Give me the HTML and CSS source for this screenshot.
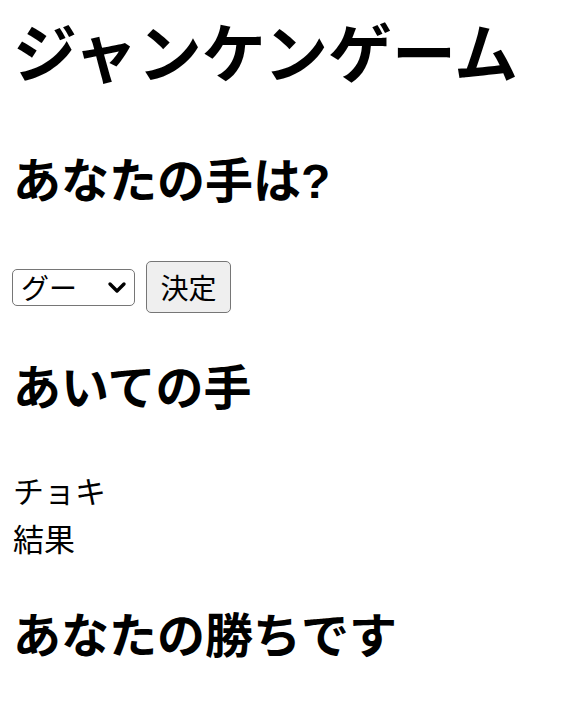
FILE: index.html
```html
<!DOCTYPE html>
<html lang="ja">
<head>
<meta charset="utf-8">
<title>ジャンケンゲーム</title>
<link rel="stylesheet" href="styles.css">
</head>
<body>
<h1 class="title">ジャンケンゲーム</h1>
<h2 class="heading first">あなたの手は?</h2>
<div class="controls">
  <span class="select-wrap">
    <select class="hand">
      <option>グー</option>
      <option>チョキ</option>
      <option>パー</option>
    </select>
    <svg class="chevron" viewBox="0 0 20 14" width="20" height="14" aria-hidden="true">
      <path d="M3 3 L10 10 L17 3" fill="none" stroke="#000" stroke-width="3.4" stroke-linecap="round" stroke-linejoin="round"/>
    </svg>
  </span>
  <button class="decide">決定</button>
</div>
<h2 class="heading opponent">あいての手</h2>
<div class="line first-line">チョキ</div>
<div class="line">結果</div>
<h2 class="heading result">あなたの勝ちです</h2>
</body>
</html>
```

FILE: styles.css
```css
html, body {
  margin: 0;
  padding: 0;
  background: #fff;
  color: #000;
}
body {
  padding: 0 13px;
  font-family: "Liberation Sans", "Noto Sans CJK JP", sans-serif;
}
.title {
  margin: 18px 0 0;
  font-size: 64px;
  line-height: 74px;
  font-weight: 700;
  letter-spacing: 0;
}
.heading {
  margin: 0;
  font-size: 48px;
  line-height: 56px;
  font-weight: 700;
}
.heading.first { margin-top: 62px; }
.controls {
  margin-top: 51px;
  display: flex;
  align-items: center;
  gap: 11px;
  margin-left: -1px;
}
.select-wrap {
  position: relative;
  display: inline-block;
  width: 123px;
  height: 37px;
}
.hand {
  appearance: none;
  -webkit-appearance: none;
  width: 123px;
  height: 37px;
  box-sizing: border-box;
  border: 1.5px solid #767676;
  border-radius: 5px;
  background: #fff;
  font-family: "Noto Sans CJK JP", sans-serif;
  font-size: 28px;
  line-height: 1;
  padding: 0 0 0 8px;
  color: #000;
}
.chevron {
  position: absolute;
  right: 8px;
  top: 12px;
  pointer-events: none;
}
.decide {
  width: 85px;
  height: 52px;
  box-sizing: border-box;
  border: 1.5px solid #767676;
  border-radius: 5px;
  background: #efefef;
  font-family: "Noto Sans CJK JP", sans-serif;
  font-size: 28px;
  color: #000;
  padding: 0;
}
.heading.opponent { margin-top: 48px; }
.line {
  font-family: "Noto Sans CJK JP", sans-serif;
  font-size: 31px;
  line-height: 48px;
}
.first-line { margin-top: 49px; }
.heading.result { margin-top: 47px; }
```
